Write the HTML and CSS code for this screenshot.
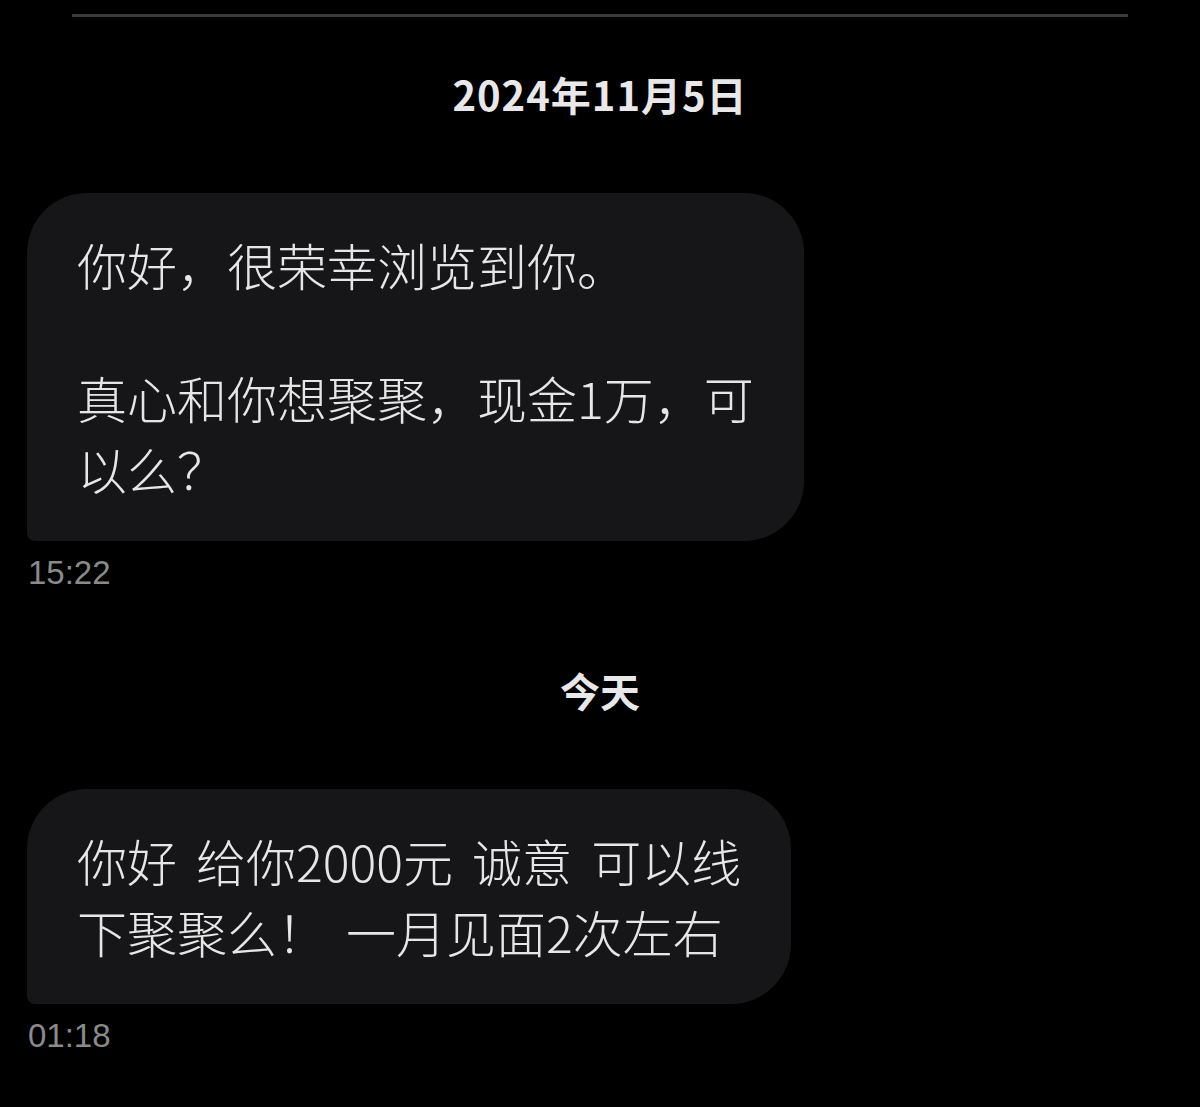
FILE: index.html
```html
<!DOCTYPE html>
<html lang="zh-CN">
<head>
    <meta charset="UTF-8">
    <meta name="viewport" content="width=device-width, initial-scale=1.0">
    <title>私信</title>
    <link rel="stylesheet" href="styles.css">
</head>
<body>

    <div class="divider"></div>

    <div class="day">2024年11月5日</div>

    <div class="msg">
        <div class="bubble">
            <p>你好，很荣幸浏览到你。</p>
            <p class="gap">真心和你想聚聚，现金1万，可<br>以么？</p>
        </div>
        <div class="time">15:22</div>
    </div>

    <div class="day today">今天</div>

    <div class="msg">
        <div class="bubble">
            <p>你好 给你2000元 诚意 可以线<br>下聚聚么！ 一月见面2次左右</p>
        </div>
        <div class="time">01:18</div>
    </div>

</body>
</html>
```

FILE: styles.css
```css
body {
    margin: 0;
    background-color: #000;
    font-family: "Noto Sans CJK SC", "Noto Sans", sans-serif;
    color: #e8e8e8;
}
.divider {
    height: 3px;
    margin: 14px 72px 0;
    background-color: #3b3b3d;
}
.day {
    margin-top: 52px;
    text-align: center;
    font-size: 40px;
    font-weight: bold;
    line-height: 50px;
    letter-spacing: 1px;
}
.today {
    margin-top: 72px;
    letter-spacing: 0;
}
.msg {
    margin: 74px 0 0 27px;
}
.bubble {
    width: fit-content;
    padding: 36px 50px 37px;
    background-color: #161618;
    border-radius: 60px 60px 60px 8px;
    font-size: 50px;
    font-weight: 300;
    line-height: 71px;
    color: #e6e6e6;
}
.bubble p {
    margin: 0;
    word-spacing: 8px;
}
.bubble .gap {
    margin-top: 62px;
}
.time {
    margin: 12px 0 0 1px;
    font-family: "Liberation Sans", Arial, sans-serif;
    font-size: 33px;
    line-height: 40px;
    color: #8a8a8a;
}
```
